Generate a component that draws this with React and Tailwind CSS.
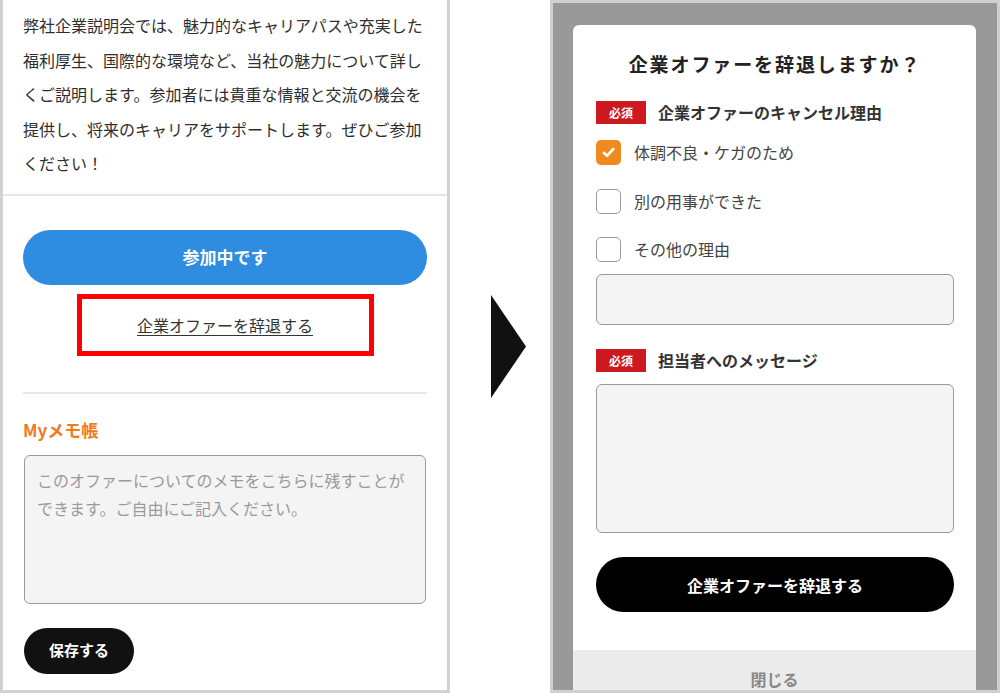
function Badge() {
  return (
    <span className="w-[50px] h-[23px] shrink-0 bg-[#cc1a20] text-white text-[12px] font-bold flex items-center justify-center leading-none">
      必須
    </span>
  );
}

function CheckRow({ label, checked }) {
  return (
    <label className="flex items-center gap-[13px] h-[25px]">
      <span
        className={
          checked
            ? "w-[25px] h-[25px] rounded-[5px] bg-[#ef8a1e] flex items-center justify-center"
            : "w-[25px] h-[25px] rounded-[5px] border-[1.5px] border-[#9a9a9a] bg-white"
        }
      >
        {checked && (
          <svg width="13" height="11" viewBox="0 0 13 11" fill="none">
            <polyline points="1.8,5.8 5,8.8 11.2,2" stroke="white" strokeWidth="2.6" strokeLinecap="round" strokeLinejoin="round" />
          </svg>
        )}
      </span>
      <span className="text-[16px] text-[#444] leading-[25px]">{label}</span>
    </label>
  );
}

function LeftPanel() {
  return (
    <div className="w-[450px] h-[693px] shrink-0 border-x-[3px] border-b-[3px] border-[#d2d2d2] bg-white flex flex-col">
      <p className="pl-[20px] pr-[10px] pt-[8px] pb-[13px] text-[16px] leading-[34.5px] text-[#2e2e2e] whitespace-nowrap">
        弊社企業説明会では、魅力的なキャリアパスや充実した
        <br />
        福利厚生、国際的な環境など、当社の魅力について詳し
        <br />
        くご説明します。参加者には貴重な情報と交流の機会を
        <br />
        提供し、将来のキャリアをサポートします。ぜひご参加
        <br />
        ください！
      </p>
      <div className="h-[2px] bg-[#e6e6e6]" />
      <div className="pl-[20px] pr-[20px] pt-[34px] flex flex-col">
        <button
          type="button"
          className="h-[55px] w-full rounded-full bg-[#2e8de0] text-white text-[17px] font-bold"
        >
          参加中です
        </button>
        <div className="self-center mt-[9px] w-[297px] h-[62px] border-[5px] border-[#ff0000] flex items-center justify-center">
          <a href="#" className="text-[16px] text-[#333] underline underline-offset-[3px] decoration-[1px]">
            企業オファーを辞退する
          </a>
        </div>
        <div className="mt-[36px] h-[2px] w-full bg-[#e8e8e8]" />
        <h3 className="mt-[24px] text-[17px] leading-[24px] font-bold text-[#f07b1e]">Myメモ帳</h3>
        <textarea
          className="mt-[13px] ml-[1px] w-[402px] h-[149px] resize-none rounded-[6px] border border-[#999] bg-[#f4f4f4] px-[12px] pt-[10px] text-[16px] leading-[28px] text-[#333] placeholder:text-[#9a9a9a] outline-none"
          placeholder="このオファーについてのメモをこちらに残すことができます。ご自由にご記入ください。"
        />
        <button
          type="button"
          className="mt-[24px] ml-[1px] w-[110px] h-[46px] rounded-full bg-[#111] text-white text-[15px] font-bold"
        >
          保存する
        </button>
      </div>
    </div>
  );
}

function Arrow() {
  return (
    <div className="w-[100px] h-[693px] shrink-0 flex items-center pl-[41px]">
      <svg width="35" height="103" viewBox="0 0 35 103">
        <polygon points="0,0 35,51.5 0,103" fill="#111" />
      </svg>
    </div>
  );
}

function RightPanel() {
  return (
    <div className="w-[450px] h-[693px] shrink-0 border-[3px] border-[#d0d0d0] bg-[#999] pl-[20px] pr-[21px] pt-[22px] overflow-hidden">
      <div className="bg-white rounded-[6px] flex flex-col">
        <div className="pl-[23px] pr-[22px] pt-[25px] flex flex-col">
          <h2 className="text-center text-[19px] leading-[28px] font-bold tracking-[0.1em] text-[#222]">
            企業オファーを辞退しますか？
          </h2>
          <div className="mt-[23px] flex items-center gap-[12px]">
            <Badge />
            <span className="text-[16px] leading-[23px] font-bold text-[#333]">企業オファーのキャンセル理由</span>
          </div>
          <div className="mt-[16px] flex flex-col gap-[23.5px]">
            <CheckRow label="体調不良・ケガのため" checked />
            <CheckRow label="別の用事ができた" />
            <CheckRow label="その他の理由" />
          </div>
          <input
            type="text"
            className="mt-[12px] h-[51px] w-full rounded-[6px] border border-[#999] bg-[#f4f4f4] px-[12px] outline-none"
          />
          <div className="mt-[24px] flex items-center gap-[12px]">
            <Badge />
            <span className="text-[16px] leading-[23px] font-bold text-[#333]">担当者へのメッセージ</span>
          </div>
          <textarea className="mt-[12px] h-[149px] w-full resize-none rounded-[6px] border border-[#999] bg-[#f4f4f4] outline-none" />
          <button
            type="button"
            className="mt-[24px] h-[55px] w-full rounded-full bg-black text-white text-[16px] font-bold"
          >
            企業オファーを辞退する
          </button>
        </div>
        <div className="mt-[38px] h-[58px] bg-[#ebebeb] flex items-center justify-center text-[16px] font-bold text-[#888]">
          閉じる
        </div>
      </div>
    </div>
  );
}

export default function App() {
  return (
    <div className="w-[1000px] h-[693px] bg-white flex font-['Noto_Sans_CJK_JP',sans-serif] overflow-hidden">
      <LeftPanel />
      <Arrow />
      <RightPanel />
    </div>
  );
}
